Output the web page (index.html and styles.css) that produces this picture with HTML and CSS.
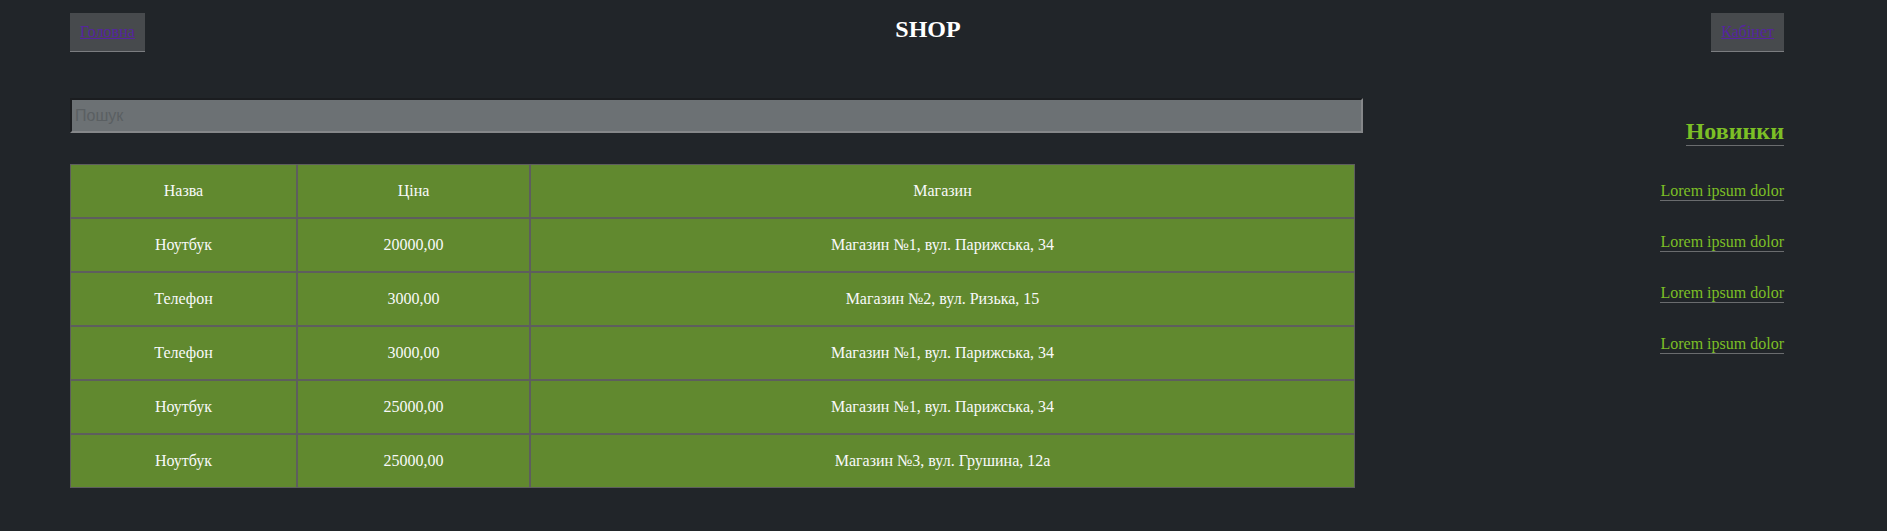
FILE: index.html
```html
<!DOCTYPE html>
<html lang="uk">
<head>
<meta charset="utf-8">
<title>SHOP</title>
<link rel="stylesheet" href="styles.css">
</head>
<body>
<div class="page">
  <header class="topbar">
    <a class="navbtn" href="#">Головна</a>
    <div class="logo">SHOP</div>
    <a class="navbtn" href="#">Кабінет</a>
  </header>
  <div class="main">
    <section class="content">
      <input class="search" type="text" placeholder="Пошук">
      <table class="goods">
        <thead>
          <tr><th class="c1">Назва</th><th class="c2">Ціна</th><th class="c3">Магазин</th></tr>
        </thead>
        <tbody>
          <tr><td>Ноутбук</td><td>20000,00</td><td>Магазин №1, вул. Парижська, 34</td></tr>
          <tr><td>Телефон</td><td>3000,00</td><td>Магазин №2, вул. Ризька, 15</td></tr>
          <tr><td>Телефон</td><td>3000,00</td><td>Магазин №1, вул. Парижська, 34</td></tr>
          <tr><td>Ноутбук</td><td>25000,00</td><td>Магазин №1, вул. Парижська, 34</td></tr>
          <tr><td>Ноутбук</td><td>25000,00</td><td>Магазин №3, вул. Грушина, 12а</td></tr>
        </tbody>
      </table>
    </section>
    <aside class="sidebar">
      <h2 class="news-title">Новинки</h2>
      <ul class="news">
        <li><a class="news-link" href="#">Lorem ipsum dolor</a></li>
        <li><a class="news-link" href="#">Lorem ipsum dolor</a></li>
        <li><a class="news-link" href="#">Lorem ipsum dolor</a></li>
        <li><a class="news-link" href="#">Lorem ipsum dolor</a></li>
      </ul>
    </aside>
  </div>
</div>
</body>
</html>
```
FILE: styles.css
```css
html, body {
  margin: 0;
  padding: 0;
  background: #212529;
}
body {
  font-family: "Liberation Serif", "Times New Roman", serif;
  font-size: 16px;
  color: #f8f9fa;
}
.page {
  width: 1714px;
  padding: 13px 0 0 70px;
}
.topbar {
  display: flex;
  justify-content: space-between;
  align-items: flex-start;
}
.navbtn {
  display: block;
  padding: 10px 10px 10px;
  line-height: 18px;
  background: #474a4d;
  border-bottom: 1px solid #7b7d80;
  color: #5624a0;
  text-decoration: underline;
}
.logo {
  margin-top: 3px;
  font-size: 24px;
  font-weight: bold;
  color: #ffffff;
}
.main {
  display: flex;
  align-items: flex-start;
}
.content {
  width: 1293px;
  padding-top: 46px;
}
.search {
  display: block;
  box-sizing: border-box;
  width: 1293px;
  height: 35px;
  margin: 0;
  padding: 0 3px;
  border-width: 2px;
  border-style: solid;
  border-color: #1b1d20 #858789 #858789 #1b1d20;
  background: #6c7174;
  font-family: "Liberation Sans", Arial, sans-serif;
  font-size: 16px;
  color: #222;
  outline: none;
}
.search::placeholder {
  color: #5a5f62;
}
.goods {
  margin-top: 31px;
  width: 1285px;
  table-layout: fixed;
  border-collapse: separate;
  border-spacing: 0;
}
.goods th,
.goods td {
  box-sizing: border-box;
  background: #61892f;
  border: 1px solid #5e5e5e;
  padding: 17px 0;
  line-height: 18px;
  font-weight: normal;
  text-align: center;
  color: #f8f9fa;
}
.goods .c1 { width: 227px; }
.goods .c2 { width: 233px; }
.sidebar {
  flex: 1;
  text-align: right;
  padding-top: 66px;
}
.news-title {
  display: inline-block;
  margin: 0;
  font-size: 24px;
  font-weight: bold;
  line-height: 27px;
  color: #7cbf26;
  border-bottom: 1px solid #6a6c6e;
}
.news {
  list-style: none;
  margin: 36px 0 0;
  padding: 0;
  display: flex;
  flex-direction: column;
  align-items: flex-end;
  gap: 32px;
}
.news-link {
  display: inline-block;
  line-height: 18px;
  color: #7cbf26;
  text-decoration: none;
  border-bottom: 1px solid #6a6c6e;
}
```
